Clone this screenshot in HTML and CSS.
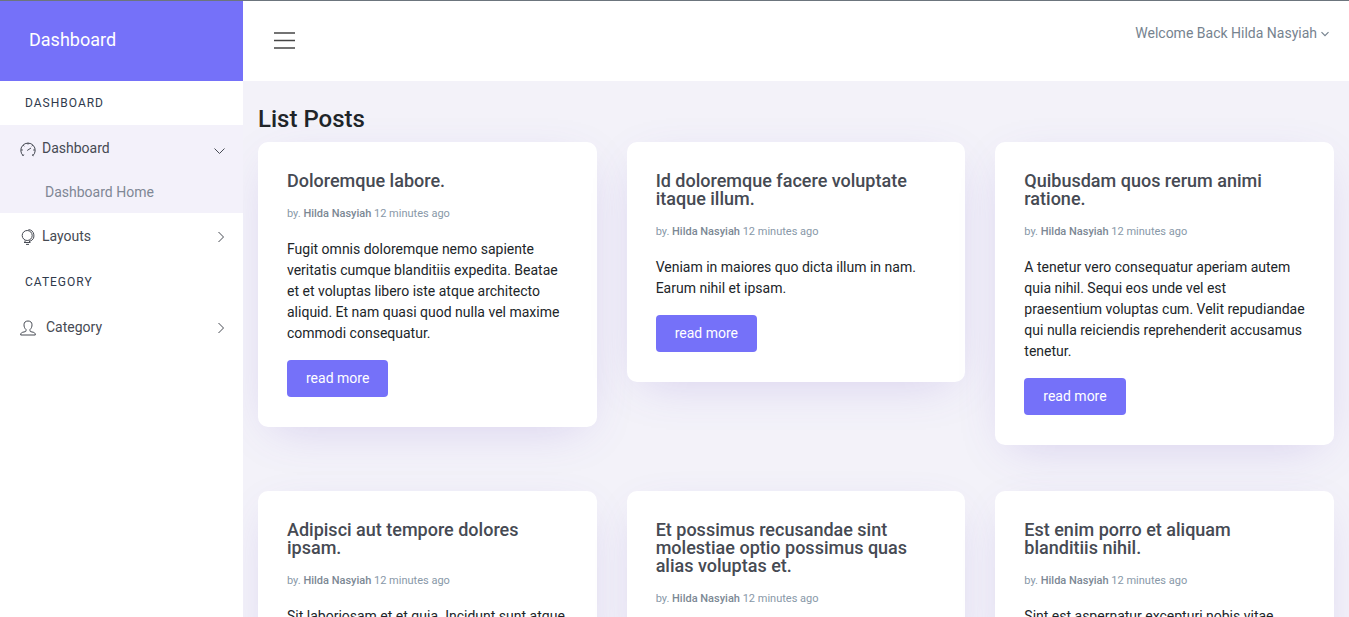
FILE: index.html
```html
<!DOCTYPE html>
<html lang="en">
<head>
<meta charset="utf-8">
<meta name="viewport" content="width=device-width, initial-scale=1">
<title>Dashboard - List Posts</title>
<link rel="stylesheet" href="styles.css">
</head>
<body>
<div class="app">
  <aside class="sidebar">
    <a class="brand" href="#">Dashboard</a>
    <nav class="nav">
      <h2 class="nav-label">DASHBOARD</h2>
      <div class="nav-group">
        <a class="nav-item" href="#">
          <svg class="nav-icon" viewBox="0 0 16 16"><path d="M3.600 15A7.200 7.200 0 1 1 12.400 15M7.200 9.500 11 7M8 1.800v1.700M1 9h1.800M13.200 9H15M3.200 4.200l1.100 1M12.800 4.200l-1.100 1M2.500 14.800l1.300-1.300M13.500 14.800l-1.300-1.300"/></svg>
          <span class="nav-text">Dashboard</span>
          <svg class="nav-arrow nav-arrow-open" viewBox="0 0 12 12"><path d="M1.500 5.500 6.500 10.500l5-5"/></svg>
        </a>
        <a class="nav-sub" href="#">Dashboard Home</a>
      </div>
      <a class="nav-item" href="#">
        <svg class="nav-icon" viewBox="0 0 16 16"><circle cx="7.200" cy="6.500" r="5"/><path d="M8.500.600a6 6 0 0 1 1.500 11.600M5 11.500v2h4.500v-2M4 13.500h6.500M6 15.400h3"/></svg>
        <span class="nav-text">Layouts</span>
        <svg class="nav-arrow" viewBox="0 0 12 12"><path d="M3.500 1 8.500 6l-5 5"/></svg>
      </a>
      <h2 class="nav-label nav-label-spaced">CATEGORY</h2>
      <a class="nav-item nav-item-wide" href="#">
        <svg class="nav-icon" viewBox="0 0 16 16"><path d="M6 9.500C4.500 8.300 4 6.500 4 4.800 4 2.300 5.600 1 8 1s4 1.300 4 3.800c0 1.700-.5 3.500-2 4.700v1.300c0 .5.300.8.800.9l2.700.6c1.200.3 1.800 1.200 1.800 2.700H.700c0-1.500.6-2.400 1.800-2.700l2.700-.6c.5-.1.800-.4.800-.9z"/></svg>
        <span class="nav-text">Category</span>
        <svg class="nav-arrow" viewBox="0 0 12 12"><path d="M3.500 1 8.500 6l-5 5"/></svg>
      </a>
    </nav>
  </aside>
  <div class="page">
    <header class="topbar">
      <button class="menu-toggle" type="button" aria-label="Toggle menu">
        <svg class="menu-icon" viewBox="0 0 21 17"><path d="M0 1h21M0 8.500h21M0 16h21"/></svg>
      </button>
      <button class="user-menu" type="button">Welcome Back Hilda Nasyiah
        <svg class="user-arrow" viewBox="0 0 8 8"><path d="M.500 2.200 4 5.700l3.500-3.500"/></svg>
      </button>
    </header>
    <main class="content">
      <h1 class="page-title">List Posts</h1>
      <div class="posts">
        <article class="card">
          <h2 class="card-title">Doloremque labore.</h2>
          <p class="card-meta">by. <a href="#">Hilda Nasyiah</a> 12 minutes ago</p>
          <p class="card-text">Fugit omnis doloremque nemo sapiente veritatis cumque blanditiis expedita. Beatae et et voluptas libero iste atque architecto aliquid. Et nam quasi quod nulla vel maxime commodi consequatur.</p>
          <a class="btn" href="#">read more</a>
        </article>
        <article class="card">
          <h2 class="card-title">Id doloremque facere voluptate itaque illum.</h2>
          <p class="card-meta">by. <a href="#">Hilda Nasyiah</a> 12 minutes ago</p>
          <p class="card-text">Veniam in maiores quo dicta illum in nam. Earum nihil et ipsam.</p>
          <a class="btn" href="#">read more</a>
        </article>
        <article class="card">
          <h2 class="card-title">Quibusdam quos rerum animi ratione.</h2>
          <p class="card-meta">by. <a href="#">Hilda Nasyiah</a> 12 minutes ago</p>
          <p class="card-text">A tenetur vero consequatur aperiam autem quia nihil. Sequi eos unde vel est praesentium voluptas cum. Velit repudiandae qui nulla reiciendis reprehenderit accusamus tenetur.</p>
          <a class="btn" href="#">read more</a>
        </article>
        <article class="card">
          <h2 class="card-title">Adipisci aut tempore dolores ipsam.</h2>
          <p class="card-meta">by. <a href="#">Hilda Nasyiah</a> 12 minutes ago</p>
          <p class="card-text">Sit laboriosam et et quia. Incidunt sunt atque</p>
        </article>
        <article class="card">
          <h2 class="card-title">Et possimus recusandae sint molestiae optio possimus quas alias voluptas et.</h2>
          <p class="card-meta">by. <a href="#">Hilda Nasyiah</a> 12 minutes ago</p>
        </article>
        <article class="card">
          <h2 class="card-title">Est enim porro et aliquam blanditiis nihil.</h2>
          <p class="card-meta">by. <a href="#">Hilda Nasyiah</a> 12 minutes ago</p>
          <p class="card-text">Sint est aspernatur excepturi nobis vitae</p>
        </article>
      </div>
    </main>
  </div>
</div>
</body>
</html>
```
FILE: styles.css
```css
* {
  box-sizing: border-box;
}

body {
  margin: 0;
  font-family: Roboto, "Liberation Sans", sans-serif;
  font-size: 14px;
  line-height: 21px;
  color: #212529;
  background: #f3f2f9;
}

h1, h2, p {
  margin: 0;
}

a {
  color: inherit;
  text-decoration: none;
}

button {
  padding: 0;
  border: 0;
  background: none;
  font: inherit;
  cursor: pointer;
}

svg {
  display: block;
  flex: none;
  fill: none;
  stroke: currentColor;
}

.app {
  display: grid;
  grid-template-columns: 243px 1fr;
  height: 100vh;
  overflow: hidden;
  border-top: 1px solid #6c757d;
}

.sidebar {
  z-index: 1;
  background: #fff;
}

.brand {
  display: flex;
  align-items: center;
  height: 80px;
  padding: 0 29px 4px;
  background: #7571f9;
  color: #fff;
  font-size: 18px;
}

.nav {
  color: #464a53;
}

.nav-label {
  padding: 12px 25px 11px;
  font-size: 12px;
  font-weight: 400;
  letter-spacing: 1px;
  color: #2f3a4c;
}

.nav-label-spaced {
  padding-top: 15px;
}

.nav-group {
  background: #f3f1fa;
}

.nav-item {
  display: flex;
  align-items: center;
  gap: 6px;
  height: 44px;
  padding: 4px 18px 0 20px;
}

.nav-item-wide {
  gap: 10px;
}

.nav-text {
  flex: 1;
  padding-bottom: 2px;
}

.nav-icon {
  width: 16px;
  height: 16px;
}

.nav-arrow {
  width: 12px;
  height: 12px;
  margin-right: -2px;
}

.nav-arrow-open {
  margin-right: 0;
}

.nav-sub {
  display: flex;
  align-items: center;
  height: 44px;
  padding: 2px 0 0 45px;
  color: #7f8795;
}

.page {
  min-width: 0;
}

.topbar {
  display: flex;
  align-items: flex-start;
  justify-content: space-between;
  height: 80px;
  padding: 22px 20px 0 31px;
  background: #fff;
}

.menu-toggle {
  padding: 9px 0;
  color: #464646;
}

.menu-icon {
  width: 21px;
  height: 17px;
  stroke-width: 1.6;
}

.user-menu {
  display: flex;
  align-items: center;
  gap: 4px;
  color: #76838f;
}

.user-arrow {
  width: 8px;
  height: 8px;
  stroke-width: 1.2;
}

.content {
  padding: 24px 15px;
}

.page-title {
  margin-bottom: 8px;
  font-size: 24px;
  font-weight: 500;
  line-height: 29px;
}

.posts {
  display: grid;
  grid-template-columns: repeat(3, 1fr);
  align-items: start;
  gap: 46px 30px;
}

.card {
  padding: 30px 29px;
  border-radius: 10px;
  background: #fff;
  box-shadow: 0 12px 46px -16px rgba(110, 80, 200, 0.25);
}

.card-title {
  font-size: 18px;
  font-weight: 500;
  line-height: 18px;
  color: #464a53;
}

.card-meta {
  margin: 15px 0 17px;
  font-size: 11px;
  line-height: 17px;
  color: #8898a8;
}

.card-meta a {
  color: #7c8894;
  font-weight: 500;
}

.btn {
  display: inline-block;
  margin-top: 16px;
  padding: 8px 19px;
  border-radius: 4px;
  background: #7571f9;
  color: #fff;
  vertical-align: top;
}
```
